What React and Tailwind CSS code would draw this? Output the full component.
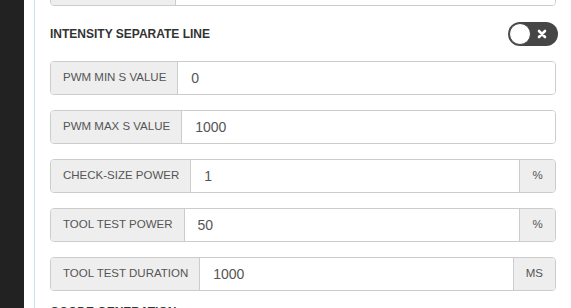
import React from 'react';

const rows = [
  { label: 'PWM MIN S VALUE', value: '0' },
  { label: 'PWM MAX S VALUE', value: '1000' },
  { label: 'CHECK-SIZE POWER', value: '1', unit: '%' },
  { label: 'TOOL TEST POWER', value: '50', unit: '%' },
  { label: 'TOOL TEST DURATION', value: '1000', unit: 'MS' },
];

const InputRow = ({ label, value, unit }) => (
  <div className="flex shrink-0 h-[34px] rounded-[4px] border border-[#cccccc] overflow-hidden">
    <div className="flex items-center pl-[12px] pr-[11px] bg-[#eeeeee] border-r border-[#cccccc] text-[11.5px] text-[#555555] whitespace-nowrap">
      {label}
    </div>
    <div className="flex-1 flex items-center px-[13px] bg-white text-[14px] text-[#555555]">{value}</div>
    {unit && (
      <div className="flex items-center justify-center px-[12px] min-w-[36px] bg-[#eeeeee] border-l border-[#cccccc] text-[11.5px] text-[#555555]">
        {unit}
      </div>
    )}
  </div>
);

const Toggle = () => (
  <div className="relative w-[50px] h-[24px] rounded-full bg-[#464646] flex items-center">
    <div className="w-[22px] h-[22px] ml-[1px] rounded-full bg-white border border-[#464646]" />
    <svg className="absolute right-[11px] top-[7px]" width="10" height="10" viewBox="0 0 10 10">
      <path d="M2 2 L8 8 M8 2 L2 8" stroke="white" strokeWidth="2.6" strokeLinecap="round" />
    </svg>
  </div>
);

export default function App() {
  return (
    <div
      className="w-[571px] h-[308px] overflow-hidden flex bg-white"
      style={{ fontFamily: '"Liberation Sans", Arial, sans-serif' }}
    >
      <div className="w-[24px] shrink-0 bg-[#222222]" />
      <div className="flex-1 pl-[10px] flex">
        <div className="flex-1 flex flex-col border-l border-[#c8e6f2] pl-[15px] pr-[15px]">
          {/* tail of the field above, scrolled out of view */}
          <div className="flex shrink-0 h-[34px] -mt-[28px] rounded-[4px] border border-[#cccccc] overflow-hidden">
            <div className="w-[125px] bg-[#eeeeee] border-r border-[#cccccc]" />
            <div className="flex-1 bg-white" />
          </div>
          <div className="flex items-center justify-between mt-[16px] h-[24px]">
            <span className="text-[12px] font-bold text-[#333333]">INTENSITY SEPARATE LINE</span>
            <div className="mr-[-2px]">
              <Toggle />
            </div>
          </div>
          <div className="flex flex-col gap-[15px] mt-[15px]">
            {rows.map((r) => (
              <InputRow key={r.label} {...r} />
            ))}
          </div>
          <div className="mt-[12px] text-[12px] font-bold text-[#333333] whitespace-nowrap">GCODE GENERATION</div>
        </div>
      </div>
    </div>
  );
}
